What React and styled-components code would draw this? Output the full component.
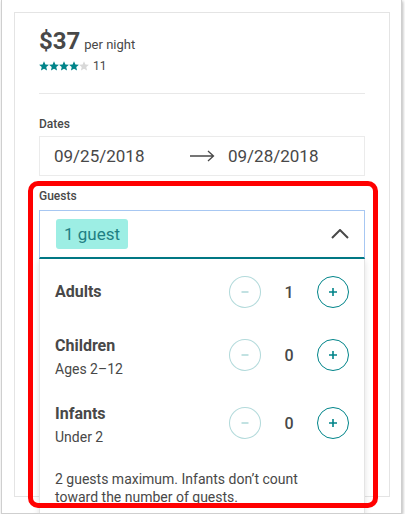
import React from "react";
import styled, { createGlobalStyle } from "styled-components";

const Global = createGlobalStyle`
  html, body { margin: 0; padding: 0; background: #fff; }
  body { font-family: Roboto, "Liberation Sans", sans-serif; color: #484848; }
  * { box-sizing: border-box; }
`;

const Frame = styled.div`
  position: relative;
  margin-left: 1px;
  width: 401px;
  height: 514px;
  border: 1px solid #cfcfcf;
  border-top: none;
  box-shadow: 1px 1px 3px rgba(0, 0, 0, 0.28);
  overflow: hidden;
  padding: 12px 11px 0 12px;
`;

const Card = styled.div`
  height: 485px;
  border: 1px solid #e4e4e4;
  padding: 13px 24px 0;
`;

const PriceRow = styled.div`
  display: flex;
  align-items: baseline;
  gap: 4px;
  height: 30px;
`;

const Price = styled.span`
  font-size: 24px;
  line-height: 30px;
  font-weight: 700;
  color: #484848;
`;

const PerNight = styled.span`
  font-size: 13px;
  line-height: 16px;
  color: #484848;
`;

const RatingRow = styled.div`
  display: flex;
  align-items: center;
  height: 14px;
  margin-top: 3px;
`;

const Stars = styled.div`
  display: flex;
  margin-right: 4px;
`;

const Count = styled.span`
  font-size: 12px;
  line-height: 14px;
`;

const Divider = styled.hr`
  border: none;
  border-top: 1px solid #e8e8e8;
  margin: 20px 0 0;
  height: 0;
`;

const Label = styled.div`
  font-size: 12px;
  font-weight: 500;
  line-height: 16px;
  margin-top: ${(p) => p.$top}px;
  margin-bottom: ${(p) => p.$bottom}px;
`;

const DateBox = styled.div`
  height: 40px;
  border: 1px solid #ebebeb;
  display: flex;
  align-items: center;
  padding-left: 14px;
`;

const DateText = styled.span`
  font-size: 17px;
  color: #484848;
  width: ${(p) => p.$w || "auto"};
`;

const ArrowWrap = styled.span`
  display: flex;
  width: 38px;
`;

const GuestsField = styled.div`
  position: relative;
`;

const GuestsInput = styled.div`
  height: 49px;
  border: 1px solid #a7c7f2;
  border-bottom: 2px solid #007a87;
  display: flex;
  align-items: center;
  justify-content: space-between;
  padding: 0 15px 0 16px;
`;

const Chip = styled.span`
  background: #9deee4;
  color: #1f7f83;
  font-size: 17px;
  line-height: 30px;
  height: 30px;
  padding: 0 8px;
  border-radius: 3px;
`;

const Panel = styled.div`
  position: absolute;
  top: 100%;
  left: 0;
  right: 0;
  z-index: 2;
  background: #fff;
  border: 1px solid #e4e4e4;
  border-top: none;
  box-shadow: 0 2px 6px rgba(0, 0, 0, 0.12);
  padding: 17px 15px 40px 15px;
  display: flex;
  flex-direction: column;
  gap: 26px;
`;

const Row = styled.div`
  display: flex;
  align-items: center;
  justify-content: space-between;
`;

const RowText = styled.div`
  display: flex;
  flex-direction: column;
  margin-top: ${(p) => (p.$shift ? "2px" : "0")};
  margin-bottom: ${(p) => (p.$shift ? "-2px" : "0")};
`;

const RowTitle = styled.div`
  font-size: 16px;
  font-weight: 700;
  line-height: 20px;
`;

const RowSub = styled.div`
  font-size: 14px;
  line-height: 18px;
  margin-top: 4px;
`;

const Stepper = styled.div`
  display: flex;
  align-items: center;
`;

const StepButton = styled.button`
  width: 32px;
  height: 32px;
  border-radius: 50%;
  background: #fff;
  border: 1px solid ${(p) => (p.$disabled ? "rgba(0,132,137,0.3)" : "#008489")};
  display: flex;
  align-items: center;
  justify-content: center;
  padding: 0;
`;

const Value = styled.span`
  width: 56px;
  text-align: center;
  font-size: 16px;
  font-weight: 500;
  color: #484848;
`;

const Note = styled.div`
  font-size: 14px;
  line-height: 18px;
  max-width: 262px;
`;

const Annotation = styled.div`
  position: absolute;
  left: 26px;
  top: 181px;
  width: 350px;
  height: 327px;
  border: 5px solid #ff0000;
  border-radius: 10px;
  z-index: 5;
  pointer-events: none;
`;

const Star = ({ color }) => (
  <svg width="10" height="10" viewBox="1 1.5 22 21">
    <path
      fill={color}
      d="M12 1.5l3.1 7.1 7.7.7-5.8 5.1 1.7 7.6L12 18l-6.7 4 1.7-7.6-5.8-5.1 7.7-.7z"
    />
  </svg>
);

const Minus = () => (
  <svg width="10" height="10" viewBox="0 0 10 10">
    <path d="M1.5 5h7" stroke="rgba(0,132,137,0.3)" strokeWidth="1.6" />
  </svg>
);

const Plus = () => (
  <svg width="10" height="10" viewBox="0 0 10 10">
    <path d="M1 5h8M5 1v8" stroke="#008489" strokeWidth="1.6" />
  </svg>
);

const GuestRow = ({ title, sub, value }) => (
  <Row>
    <RowText $shift={!!sub}>
      <RowTitle>{title}</RowTitle>
      {sub && <RowSub>{sub}</RowSub>}
    </RowText>
    <Stepper>
      <StepButton $disabled aria-label="decrease">
        <Minus />
      </StepButton>
      <Value>{value}</Value>
      <StepButton aria-label="increase">
        <Plus />
      </StepButton>
    </Stepper>
  </Row>
);

export default function App() {
  return (
    <>
      <Global />
      <Frame>
        <Card>
          <PriceRow>
            <Price>$37</Price>
            <PerNight>per night</PerNight>
          </PriceRow>
          <RatingRow>
            <Stars>
              {[0, 1, 2, 3].map((i) => (
                <Star key={i} color="#008489" />
              ))}
              <Star color="#d8d8d8" />
            </Stars>
            <Count>11</Count>
          </RatingRow>
          <Divider />
          <Label $top={22} $bottom={4}>Dates</Label>
          <DateBox>
            <DateText $w="136px">09/25/2018</DateText>
            <ArrowWrap>
              <svg width="25" height="12" viewBox="0 0 25 12">
                <path
                  d="M0 6h23.5M18 1l5.5 5-5.5 5"
                  fill="none"
                  stroke="#484848"
                  strokeWidth="1.3"
                />
              </svg>
            </ArrowWrap>
            <DateText>09/28/2018</DateText>
          </DateBox>
          <Label $top={12} $bottom={6}>Guests</Label>
          <GuestsField>
            <GuestsInput>
              <Chip>1 guest</Chip>
              <svg width="18" height="10" viewBox="0 0 18 10">
                <path d="M1 9l8-8 8 8" fill="none" stroke="#484848" strokeWidth="2" />
              </svg>
            </GuestsInput>
            <Panel>
              <GuestRow title="Adults" value={1} />
              <GuestRow title="Children" sub="Ages 2–12" value={0} />
              <GuestRow title="Infants" sub="Under 2" value={0} />
              <Note>2 guests maximum. Infants don’t count toward the number of guests.</Note>
            </Panel>
          </GuestsField>
        </Card>
        <Annotation />
      </Frame>
    </>
  );
}
